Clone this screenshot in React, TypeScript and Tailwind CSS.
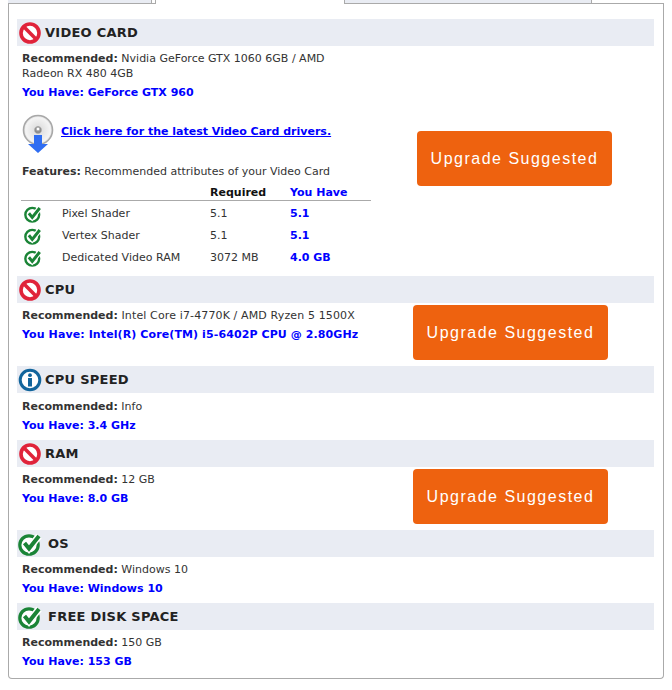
const Stop = () => (
  <svg width="24" height="24" viewBox="0 0 24 24" className="shrink-0">
    <circle cx="12" cy="12" r="9" fill="#fff" stroke="#e0233a" strokeWidth="3.6" />
    <path d="M5.6 5.6 18.4 18.4" stroke="#e0233a" strokeWidth="3.6" />
  </svg>
);

const Info = () => (
  <svg width="24" height="24" viewBox="0 0 24 24" className="shrink-0">
    <circle cx="12" cy="12" r="9.8" fill="#fff" stroke="#12659c" strokeWidth="3" />
    <circle cx="12" cy="7.2" r="1.9" fill="#12659c" />
    <rect x="10" y="10" width="4" height="8.5" fill="#12659c" />
  </svg>
);

const Check = ({ size = 24 }: { size?: number }) => (
  <svg width={size} height={size} viewBox="0 0 24 24" className="shrink-0">
    <circle cx="11" cy="13" r="9.2" fill="#fff" stroke="#1a8436" strokeWidth="3.2" />
    <path d="M6.5 11 11 16.5 21 4" fill="none" stroke="#fff" strokeWidth="7" />
    <path d="M6.5 11 11 16.5 21 4" fill="none" stroke="#1a8436" strokeWidth="4" />
  </svg>
);

const Disc = () => (
  <svg width="32" height="42" viewBox="0 0 32 42" className="shrink-0">
    <defs>
      <radialGradient id="d">
        <stop offset="0.2" stopColor="#8e8e8e" />
        <stop offset="0.3" stopColor="#e2e2e2" />
        <stop offset="0.85" stopColor="#f4f4f4" />
        <stop offset="1" stopColor="#d8d8d8" />
      </radialGradient>
    </defs>
    <circle cx="16" cy="16" r="14.5" fill="url(#d)" stroke="#a8a8a8" strokeWidth="1.6" />
    <circle cx="16" cy="15" r="2" fill="#fff" stroke="#999" />
    <path d="M12 21h8v9h6L16 39 6 30h6z" fill="#2f6df2" />
  </svg>
);

const Heading = ({ icon, title, gap = "gap-[3px]", low = false }: { icon: React.ReactNode; title: string; gap?: string; low?: boolean }) => (
  <div className={`flex h-[27px] items-center bg-[#e9ecf3] pl-[1px] ${gap} ${low ? "pt-[1px]" : ""}`}>
    {icon}
    <span className="text-[13px] font-bold tracking-[0.25px] text-[#222]">{title}</span>
  </div>
);

const Rec = ({ children, wide = false }: { children: React.ReactNode; wide?: boolean }) => (
  <p className={`leading-[15px] ${wide ? "tracking-[0.13px]" : ""}`}>
    <b className="tracking-normal">Recommended:</b> {children}
  </p>
);

const Have = ({ children, wide = false }: { children: React.ReactNode; wide?: boolean }) => (
  <p className={`mt-1 leading-[15px] font-bold text-[#0000ff] ${wide ? "tracking-[0.1px]" : ""}`}>You Have: {children}</p>
);

const Upgrade = () => (
  <div className="flex h-[55px] w-[195px] items-center justify-center rounded-[4px] bg-[#ee620f] font-['Liberation_Sans',sans-serif] text-[16px] tracking-[1.5px] text-white">
    Upgrade Suggested
  </div>
);

const rows = [
  ["Pixel Shader", "5.1", "5.1"],
  ["Vertex Shader", "5.1", "5.1"],
  ["Dedicated Video RAM", "3072 MB", "4.0 GB"],
];

export default function App() {
  return (
    <div className="h-[690px] w-[672px] overflow-hidden bg-white font-['DejaVu_Sans',Verdana,sans-serif] text-[11px] text-[#333]">
      <div className="flex h-[4px] pl-[8px]">
        <div className="h-[4px] w-[144px] border-r border-b border-[#aaa] bg-[#e9ecf3]" />
        <div className="h-[4px] w-[3px] border-b border-[#aaa]" />
        <div className="h-[4px] w-[190px] border-l border-r border-[#aaa] bg-white" />
        <div className="h-[4px] w-[247px] border-r border-b border-[#aaa] bg-[#e9ecf3]" />
        <div className="mr-[8px] h-[4px] flex-1 border-b border-[#aaa]" />
      </div>
      <div className="mx-[8px] h-[675px] rounded-b-[4px] border-x border-b border-[#aaa] pt-[15px] pr-[9px] pl-[8px]">
        <section>
          <Heading icon={<Stop />} title="VIDEO CARD" />
          <div className="flex">
            <div className="w-[360px] pt-[5px] pl-[5px]">
              <div className="w-[315px]">
                <Rec>Nvidia GeForce GTX 1060 6GB / AMD Radeon RX 480 4GB</Rec>
              </div>
              <Have>GeForce GTX 960</Have>
              <div className="mt-[14px] flex h-[42px] gap-[7px]">
                <Disc />
                <a className="mt-[10px] leading-[15px] font-bold text-[#0000ff] underline">
                  Click here for the latest Video Card drivers.
                </a>
              </div>
              <p className="mt-[8px] leading-[15px]">
                <b>Features:</b> Recommended attributes of your Video Card
              </p>
              <div className="mt-[6px] -ml-[1px] grid grid-cols-[41px_148px_80px_81px] text-[11px]">
                <div className="col-span-2 h-[16px] border-b border-[#aaa]" />
                <div className="h-[16px] border-b border-[#aaa] leading-[15px] font-bold text-[#111]">Required</div>
                <div className="h-[16px] border-b border-[#aaa] leading-[15px] font-bold text-[#0000ff]">You Have</div>
                <div className="col-span-4 h-[2px]" />
                {rows.map((r) => (
                  <div key={r[0]} className="col-span-4 grid h-[22px] grid-cols-subgrid items-center">
                    <div className="pl-[3px]"><Check size={18} /></div>
                    <div>{r[0]}</div>
                    <div>{r[1]}</div>
                    <div className="font-bold text-[#0000ff]">{r[2]}</div>
                  </div>
                ))}
              </div>
              <div className="h-[7px]" />
            </div>
            <div className="pt-[85px] pl-[40px]"><Upgrade /></div>
          </div>
        </section>
        <section>
          <Heading icon={<Stop />} title="CPU" />
          <div className="flex h-[63px] justify-between">
            <div className="pt-[5px] pl-[5px]">
              <Rec wide>Intel Core i7-4770K / AMD Ryzen 5 1500X</Rec>
              <Have wide>Intel(R) Core(TM) i5-6402P CPU @ 2.80GHz</Have>
            </div>
            <div className="pt-[2px] pr-[46px]"><Upgrade /></div>
          </div>
        </section>
        <section>
          <Heading icon={<Info />} title="CPU SPEED" low />
          <div className="h-[47px] pt-[6px] pl-[5px]">
            <Rec>Info</Rec>
            <Have>3.4 GHz</Have>
          </div>
        </section>
        <section>
          <Heading icon={<Stop />} title="RAM" />
          <div className="flex h-[63px] justify-between">
            <div className="pt-[5px] pl-[5px]">
              <Rec>12 GB</Rec>
              <Have>8.0 GB</Have>
            </div>
            <div className="pt-[2px] pr-[46px]"><Upgrade /></div>
          </div>
        </section>
        <section>
          <Heading icon={<Check />} title="OS" gap="gap-[6px]" />
          <div className="h-[46px] pt-[5px] pl-[5px]">
            <Rec>Windows 10</Rec>
            <Have>Windows 10</Have>
          </div>
        </section>
        <section>
          <Heading icon={<Check />} title="FREE DISK SPACE" gap="gap-[6px]" />
          <div className="pt-[5px] pl-[5px]">
            <Rec>150 GB</Rec>
            <Have>153 GB</Have>
          </div>
        </section>
      </div>
    </div>
  );
}
